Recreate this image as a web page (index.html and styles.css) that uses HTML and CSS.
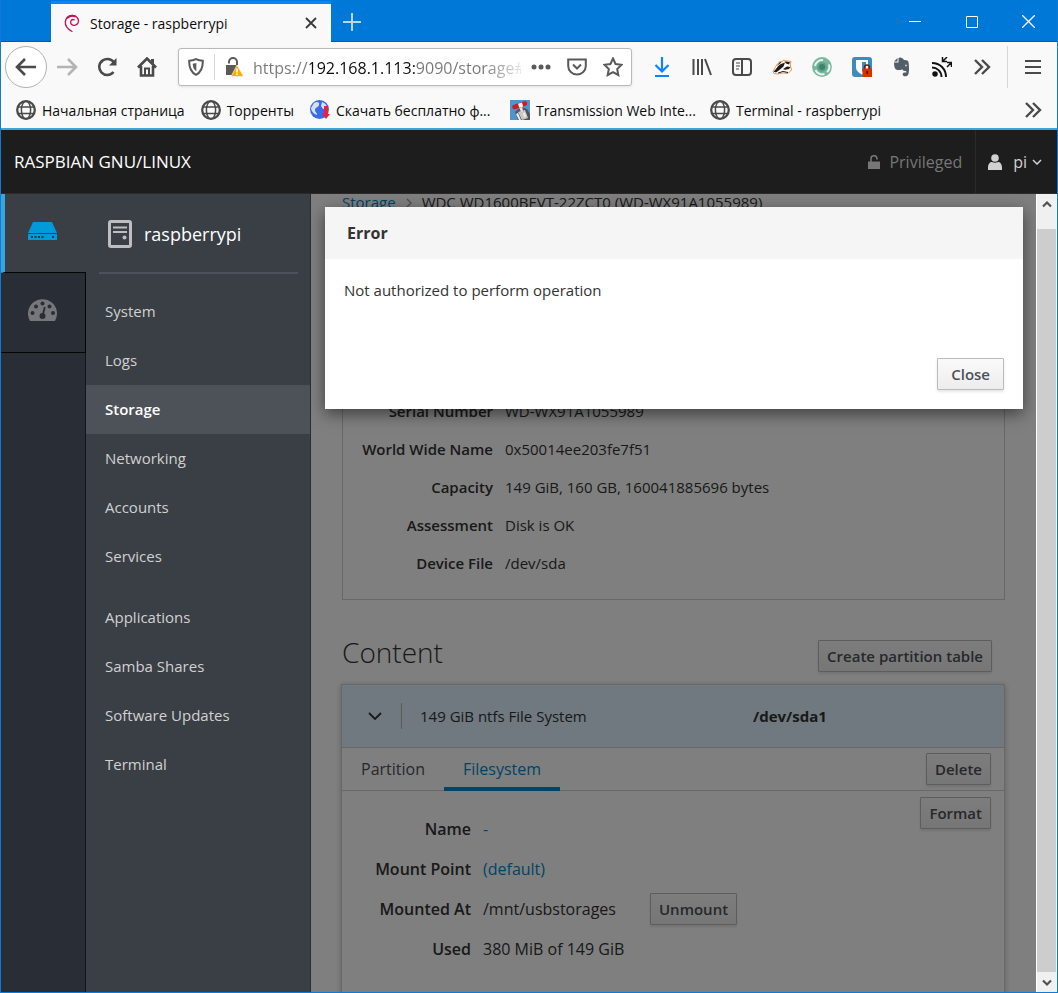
FILE: index.html
```html
<!DOCTYPE html>
<html lang="en">
<head>
    <meta charset="UTF-8">
    <meta name="viewport" content="width=device-width, initial-scale=1.0">
    <title>Storage - raspberrypi</title>
    <link rel="stylesheet" href="styles.css">
</head>
<body>
<svg class="symbols" aria-hidden="true">
    <symbol id="globe" viewBox="0 0 20 20">
        <g fill="none" stroke="#4a4a4b" stroke-width="1.5">
            <circle cx="10" cy="10" r="8.8" stroke-width="2.300"/>
            <ellipse cx="10" cy="10" rx="4.600" ry="8.800"/>
            <path d="M2 7h16M2 13.500h16"/>
        </g>
    </symbol>
    <symbol id="chevrons" viewBox="0 0 20 20">
        <path d="M3 3l7 7-7 7M10 3l7 7-7 7" fill="none" stroke="#4a4a4b" stroke-width="2.4"/>
    </symbol>
</svg>
<div class="window">
    <!-- title bar -->
    <div class="titlebar">
        <div class="tab">
            <svg class="favicon" viewBox="0 0 18 20" fill="none" stroke="#c7114f" stroke-linecap="round">
                <path d="M9 19C4 16 1 12.500 1.500 8 2 3.500 5.500 1 9.500 1c4 0 7 3 6.800 6.500C16 11 12.500 12.800 10 11.800 7.500 11 6.800 8.500 8 6.800c.8-1.200 2.200-1.500 3.500-1" stroke-width="1.500"/>
                <path d="M4 3.500C6 1.500 9 1 12 1.800" stroke-width="2.200"/>
            </svg>
            <span class="tab-title">Storage - raspberrypi</span>
            <button class="tab-close" aria-label="Close tab">
                <svg width="12" height="12" viewBox="0 0 12 12"><path d="M1 1l10 10M11 1L1 11" stroke="#3a3a3b" stroke-width="1.800"/></svg>
            </button>
        </div>
        <button class="new-tab" aria-label="New tab">
            <svg width="18" height="18" viewBox="0 0 18 18"><path d="M9 0v18M0 9h18" stroke="#b5d8f5" stroke-width="2"/></svg>
        </button>
        <div class="window-controls">
            <button aria-label="Minimize"><svg width="12" height="12" viewBox="0 0 12 12"><path d="M0 5.500h12" stroke="#fff"/></svg></button>
            <button aria-label="Maximize"><svg width="12" height="12" viewBox="0 0 12 12"><path d="M.5.5h11v11H.5z" stroke="#fff" fill="none"/></svg></button>
            <button aria-label="Close"><svg width="13" height="13" viewBox="0 0 13 13"><path d="M0 0l13 13M13 0L0 13" stroke="#fff" stroke-width="1.300"/></svg></button>
        </div>
    </div>

    <!-- navigation -->
    <div class="navbar">
        <button class="tool back" aria-label="Back"><svg width="22" height="20" viewBox="0 0 22 20"><path d="M21 10H3M10 2L2 10l8 8" class="line heavy"/></svg></button>
        <button class="tool" aria-label="Forward"><svg width="22" height="20" viewBox="0 0 22 20"><path d="M1 10h18M12 2l8 8-8 8" class="line heavy pale"/></svg></button>
        <button class="tool" aria-label="Reload"><svg width="20" height="20" viewBox="0 0 20 20"><path d="M17.500 6.500A8 8 0 1 0 16.500 15" class="line heavy"/><path d="M19.500 1v7.500H12z" fill="#4a4a4b"/></svg></button>
        <button class="tool" aria-label="Home"><svg width="20" height="20" viewBox="0 0 20 20"><path d="M1 10.500l9-9 9 9M4 9v9.500h12V9" class="line heavy"/><path d="M8 18v-6.500h4V18" class="line"/><path d="M14 2h3v5l-3-3z" fill="#4a4a4b"/></svg></button>
        <div class="urlbar">
            <svg width="16" height="18" viewBox="0 0 16 18"><path d="M8 1.200c2 1 4.500 1.500 6.800 1.500C15 9 13.500 14 8 16.800 2.500 14 1 9 1.200 2.700 3.500 2.700 6 2.200 8 1.200z" fill="none" stroke="#5a5a5b" stroke-width="2"/><path d="M8.300 5v8.300C5.500 11.500 4.800 9 4.800 5.800z" fill="#5a5a5b"/></svg>
            <span class="divider"></span>
            <svg width="18" height="20" viewBox="0 0 18 20">
                <path d="M4 6.500V5a4 4 0 0 1 8 0v3" fill="none" stroke="#5a5a5b" stroke-width="2"/>
                <path d="M1 8h11v10H1z" fill="#5a5a5b"/>
                <path d="M12 8l6 10.500c.3.600 0 1-.5 1H7c-.6 0-.8-.5-.5-1z" fill="#ffab00" stroke="#f9f9fa" stroke-width=".6"/>
                <path d="M12 11.500v4M12 16.500v1.500" stroke="#fff" stroke-width="1.600"/>
            </svg>
            <input class="url" type="text" aria-label="Address" value="https://192.168.1.113:9090/storage#/WX91A1055989">
            <svg width="20" height="6" viewBox="0 0 20 6" fill="#5a5a5b"><circle cx="3" cy="3" r="2.500"/><circle cx="10" cy="3" r="2.500"/><circle cx="17" cy="3" r="2.500"/></svg>
            <svg width="20" height="18" viewBox="0 0 20 18"><path d="M1.200 1.500h17.600v6.500a8.800 8.500 0 0 1-17.600 0z" class="line soft"/><path d="M6 6.500l4 4 4-4" class="line soft"/></svg>
            <svg width="20" height="20" viewBox="0 0 20 20"><path d="M10 1.500l2.600 5.500 6 .8-4.400 4.200 1.100 6L10 15.100 4.700 18l1.100-6L1.400 7.800l6-.8z" class="line soft"/></svg>
        </div>
        <div class="extensions">
            <button class="tool" aria-label="Downloads"><svg width="16" height="20" viewBox="0 0 16 20"><path d="M8 0v14M1.500 8L8 14.500 14.500 8M1 19h14" fill="none" stroke="#0a84ff" stroke-width="2.200"/></svg></button>
            <button class="tool" aria-label="Library"><svg width="20" height="18" viewBox="0 0 20 18"><path d="M1.500 1v16M6 1v16M10 1v16M13 1l6 16" class="line"/></svg></button>
            <button class="tool" aria-label="Sidebars"><svg width="20" height="18" viewBox="0 0 20 18"><rect x="1" y="1" width="18" height="16" rx="3" class="line"/><path d="M10 1v16" class="line"/><path d="M4 5h4M4 8h4M4 11h3" stroke="#4a4a4b" stroke-width="1.200"/></svg></button>
            <button class="tool" aria-label="Privacy Badger">
                <svg width="20" height="16" viewBox="0 0 20 16">
                    <path d="M1 12.500C3 9.500 4 5 8 2.500l2.500.2L11.500 1l2 .7 5.500.8-.8 3.500 1.300 5-3.500 3.500-5-.5-5 1-4-.5z" fill="#fff" stroke="#f08a3c" stroke-width=".9"/>
                    <path d="M1.500 12.500C4 11 5 7 9 5l4-1.500-1.500 4L8 10.500l-4 3z" fill="#1e1a18"/>
                    <path d="M4.500 7L8 3l1.500.5z" fill="#1e1a18"/>
                    <path d="M12.500 2.200l5.500 1-1 2.300-3-1zM11 10l4-2.500 3.500.5-1.500 2-4 .8z" fill="#1e1a18"/>
                    <path d="M6 14l5-1.500 5 1" fill="none" stroke="#1e1a18"/>
                </svg>
            </button>
            <button class="tool" aria-label="Ring">
                <svg width="20" height="20" viewBox="0 0 20 20"><circle cx="10" cy="10" r="9.900" fill="#7ab79e"/><path d="M3 9a7 7 0 0 1 8-5.800M17 7.500A7 7 0 0 1 15 15M12.500 17A7.200 7.200 0 0 1 3.500 13" fill="none" stroke="#e8f5ef" stroke-width="2"/><circle cx="10" cy="10" r="5" fill="#62a488"/><circle cx="10" cy="10" r="3" fill="#40826a"/></svg>
            </button>
            <button class="tool" aria-label="Bitwarden">
                <svg width="20" height="20" viewBox="0 0 20 20"><rect width="20" height="20" rx="3" fill="#3c8dbc"/><path d="M4 3h12v7c0 4-3 6-6 7.500C7 16 4 14 4 10z" fill="#fff"/><path d="M10 5h4v5c0 2-2 4-4 5z" fill="#3c8dbc"/><path d="M12.500 12v-1.500a2.500 2.500 0 0 1 5 0V12" fill="none" stroke="#7a1a06" stroke-width="1.500"/><rect x="10.500" y="11.500" width="9.500" height="8.500" fill="#d83000"/><path d="M15.200 14v3" stroke="#5a1000" stroke-width="1.500"/></svg>
            </button>
            <button class="tool" aria-label="Evernote">
                <svg width="18" height="20" viewBox="0 0 18 20"><path d="M5.500 1v4.500H1c0 3 .5 6 2 7 2 .8 4 .5 5.500.2.500-1 .5-1 1 0 .8 1 2 1.300 3 1.300.8 0 1 1 .8 1.500h-2c-1.500 0-1.800 1.500-1.500 2.500.5 1.200 2 1.500 4 1 2-.8 2.200-4 2.200-8 0-3-.3-6-1-7-.8-1-3-.8-4-1C10 1.500 9 .5 7 .5z" fill="#525e68"/><path d="M1 4.500L4.500 1v3.500z" fill="#525e68"/><circle cx="13" cy="8.500" r="1" fill="#c8ced2"/></svg>
            </button>
            <button class="tool" aria-label="Feeds">
                <svg width="20" height="20" viewBox="0 0 20 20" fill="none" stroke="#111" stroke-width="1.900"><circle cx="3" cy="17" r="1.800" fill="#111"/><path d="M0 10.500c5 0 9.500 4 9.500 9.500M0 6c8 0 14 6 14 14"/><path d="M15 0l-4 4M10.500 0v4.500H15M15 5.500h4.500V10M19 6l-4 4" stroke-width="1.500"/></svg>
            </button>
            <button class="tool" aria-label="More tools"><svg width="20" height="20"><use href="#chevrons"/></svg></button>
        </div>
        <button class="menu" aria-label="Menu"><svg width="16" height="16" viewBox="0 0 16 16"><path d="M0 2h16M0 8h16M0 14h16" class="line"/></svg></button>
    </div>

    <!-- bookmarks -->
    <nav class="bookmarks">
        <a href="#"><svg class="bm-icon"><use href="#globe"/></svg>Начальная страница</a>
        <a href="#"><svg class="bm-icon"><use href="#globe"/></svg>Торренты</a>
        <a href="#" class="long">
            <svg class="bm-icon" viewBox="0 0 20 20"><circle cx="9.500" cy="9.500" r="9.500" fill="#3a6be8"/><path d="M4 3c3-2 6-1 5 2s-4 2-4 5 3 3 2 5c-3-1-6-4-6-7zM12 2c3 1 5 3 5 6l-4 1-2-3z" fill="#d4e2ff"/><path d="M14 6h4v8h2l-4 5-4-5h2z" fill="#ee1f3f"/></svg>
            Скачать бесплатно ф...
        </a>
        <a href="#" class="long">
            <svg class="bm-icon" viewBox="0 0 20 20"><path d="M0 0h20v20H0z" fill="#5094cf"/><path d="M5 12l6-5 6 2 3 5v6H8z" fill="#555"/><path d="M8 12l7-2 3 8-6 2z" fill="#c9c9c9"/><path d="M6 14l2-1 3 7H9zM13 13l2-.5 1 4-2 .5z" fill="#eee"/><path d="M9 7l3-1 1 5-2 1z" fill="#e6e6e6"/><path d="M4.500 7L15 3.500" stroke="#cf1a1f" stroke-width="4.500" stroke-linecap="round"/><path d="M8 3.800l4-1.300 1.200 4-4 1.300z" fill="#f4f4f4"/></svg>
            Transmission Web Inte...
        </a>
        <a href="#"><svg class="bm-icon"><use href="#globe"/></svg>Terminal - raspberrypi</a>
        <button class="more" aria-label="More bookmarks"><svg width="20" height="20"><use href="#chevrons"/></svg></button>
    </nav>

    <!-- cockpit -->
    <header class="topbar">
        <span class="brand">RASPBIAN GNU/LINUX</span>
        <span class="privileged">
            <svg width="12" height="14" viewBox="0 0 12 14"><path d="M3 7V4a3 3 0 0 1 6-.5v1" fill="none" stroke="#777" stroke-width="1.600"/><path d="M0 6.500h12V14H0z" fill="#777"/></svg>
            Privileged
        </span>
        <button class="user">
            <svg width="14" height="16" viewBox="0 0 14 16" fill="#d1d1d1"><circle cx="7" cy="4" r="3.800"/><path d="M0 16v-2.500C0 10 2 8 4 8c2 1 4 1 6 0 2 0 4 2 4 5.500V16z"/></svg>
            <span>pi</span>
            <svg class="caret" width="10" height="6" viewBox="0 0 10 6"><path d="M1 1l4 4 4-4" fill="none" stroke="#d1d1d1" stroke-width="1.500"/></svg>
        </button>
    </header>

    <div class="workspace">
        <nav class="rail">
            <a href="#" class="active" aria-label="Host">
                <svg width="30" height="18" viewBox="0 0 30 18"><path d="M5 0h19l5 11H0z" fill="#0099d9"/><path d="M0 12h29v6H0z" fill="#0099d9"/><path d="M3 15h2M6.500 15h2M10 15h2M13.500 15h2M24 15h2" stroke="#263a4c" stroke-width="2"/></svg>
            </a>
            <a href="#" aria-label="Dashboard">
                <svg width="30" height="22" viewBox="0 0 30 22"><path d="M2 22A14.500 14.500 0 1 1 27 22z" fill="#75777b"/><g fill="#292e36"><circle cx="4.500" cy="14" r="2"/><circle cx="8" cy="7.500" r="2"/><circle cx="14.500" cy="4.500" r="2"/><circle cx="21.500" cy="7.500" r="2"/><circle cx="25" cy="14" r="2"/><circle cx="14.500" cy="17" r="3"/></g><path d="M14.800 16l2-8" stroke="#292e36" stroke-width="1.800"/></svg>
            </a>
        </nav>

        <nav class="sidebar">
            <div class="host">
                <svg width="24" height="28" viewBox="0 0 24 28"><rect x="1.500" y="1.500" width="21" height="25" rx="1.500" fill="none" stroke="#bdbec1" stroke-width="3"/><path d="M5 7.500h14M5 12h14" stroke="#bdbec1" stroke-width="2.200"/><circle cx="16.500" cy="17.500" r="2" fill="#bdbec1"/></svg>
                raspberrypi
            </div>
            <ul>
                <li><a href="#">System</a></li>
                <li><a href="#">Logs</a></li>
                <li><a href="#" class="active">Storage</a></li>
                <li><a href="#">Networking</a></li>
                <li><a href="#">Accounts</a></li>
                <li><a href="#">Services</a></li>
            </ul>
            <ul>
                <li><a href="#">Applications</a></li>
                <li><a href="#">Samba Shares</a></li>
                <li><a href="#">Software Updates</a></li>
                <li><a href="#">Terminal</a></li>
            </ul>
        </nav>

        <main class="main">
            <div class="page">
                <div class="breadcrumb">
                    <a href="#">Storage</a>
                    <svg width="6" height="10" viewBox="0 0 6 10"><path d="M1 1l4 4-4 4" fill="none" stroke="#9c9c9c" stroke-width="1.300"/></svg>
                    <span>WDC WD1600BEVT-22ZCT0 (WD-WX91A1055989)</span>
                </div>

                <dl class="drive">
                    <dt>Serial Number</dt><dd>WD-WX91A1055989</dd>
                    <dt>World Wide Name</dt><dd>0x50014ee203fe7f51</dd>
                    <dt>Capacity</dt><dd>149 GiB, 160 GB, 160041885696 bytes</dd>
                    <dt>Assessment</dt><dd>Disk is OK</dd>
                    <dt>Device File</dt><dd>/dev/sda</dd>
                </dl>

                <div class="content-head">
                    <h1>Content</h1>
                    <button class="btn">Create partition table</button>
                </div>

                <section class="volume">
                    <div class="volume-head">
                        <svg class="toggle" width="14" height="8" viewBox="0 0 14 8"><path d="M1 1l6 6 6-6" fill="none" stroke="#333" stroke-width="1.800"/></svg>
                        <span class="volume-name">149 GiB ntfs File System</span>
                        <strong>/dev/sda1</strong>
                    </div>
                    <div class="tabs">
                        <a href="#">Partition</a>
                        <a href="#" class="active">Filesystem</a>
                        <button class="btn">Delete</button>
                    </div>
                    <div class="volume-body">
                        <dl class="fs">
                            <dt>Name</dt><dd><a href="#">-</a></dd>
                            <dt>Mount Point</dt><dd><a href="#">(default)</a></dd>
                            <dt>Mounted At</dt><dd>/mnt/usbstorages <button class="btn">Unmount</button></dd>
                            <dt>Used</dt><dd>380 MiB of 149 GiB</dd>
                        </dl>
                        <button class="btn">Format</button>
                    </div>
                </section>
            </div>

            <div class="backdrop">
                <div class="modal" role="dialog" aria-labelledby="modal-title">
                    <h2 id="modal-title">Error</h2>
                    <p>Not authorized to perform operation</p>
                    <div class="modal-footer"><button class="btn btn-close">Close</button></div>
                </div>
            </div>
        </main>

        <div class="scrollbar">
            <svg width="10" height="8" viewBox="0 0 10 8"><path d="M1 6.500l4-4 4 4" fill="none" stroke="#505050" stroke-width="2.200"/></svg>
            <div class="thumb"></div>
            <svg width="10" height="8" viewBox="0 0 10 8"><path d="M1 1.500l4 4 4-4" fill="none" stroke="#505050" stroke-width="2.200"/></svg>
        </div>
    </div>
</div>
</body>
</html>
```
FILE: styles.css
```css
* {
    box-sizing: border-box;
}
body {
    margin: 0;
    font-family: "Open Sans", "Noto Sans", sans-serif;
    font-size: 15px;
    color: #333;
}
a {
    color: #0088ce;
    text-decoration: none;
}
button {
    font: inherit;
    padding: 0;
    border: 0;
    background: none;
}
svg {
    flex: none;
}
ul, dl, dd, h1, h2, p {
    margin: 0;
    padding: 0;
}
.symbols {
    position: absolute;
    width: 0;
    height: 0;
}
.line {
    fill: none;
    stroke: #4a4a4b;
    stroke-width: 2;
}
.line.heavy {
    stroke-width: 2.6;
}
.line.pale {
    stroke: #b4b4b5;
}
.line.soft {
    stroke: #5a5a5b;
}

.window {
    display: flex;
    flex-direction: column;
    height: 100vh;
    border: 1px solid #0f7bd6;
    border-top: 0;
    overflow: hidden;
}

/* browser title bar */
.titlebar {
    display: flex;
    height: 42px;
    padding-top: 1px;
    background: #0078d7;
    box-shadow: inset 0 -1px #005a9e;
}
.tab {
    display: flex;
    align-items: center;
    width: 280px;
    margin-left: 50px;
    padding: 0 14px 0 13px;
    border-top: 3px solid #0a84ff;
    background: #f9f9fa;
    color: #0c0c0d;
    font-size: 14px;
}
.favicon {
    width: 16px;
    height: 19px;
}
.tab-title {
    flex: 1;
    margin-left: 10px;
}
.tab-close, .new-tab, .window-controls button {
    display: flex;
    align-items: center;
    justify-content: center;
}
.new-tab {
    width: 42px;
}
.window-controls {
    display: flex;
    margin-left: auto;
}
.window-controls button {
    width: 57px;
}

/* browser toolbar */
.navbar {
    display: flex;
    align-items: center;
    height: 50px;
    padding-left: 4px;
    background: #f9f9fa;
}
.tool {
    display: flex;
    align-items: center;
    justify-content: center;
    width: 40px;
    height: 42px;
}
.back {
    width: 42px;
    border: 1px solid #b1b1b3;
    border-radius: 50%;
    background: #fff;
}
.urlbar {
    display: flex;
    flex: 1;
    align-items: center;
    gap: 16px;
    height: 38px;
    min-width: 0;
    margin: 0 10px 0 11px;
    padding: 0 8px 0 9px;
    border: 1px solid #b9b9ba;
    border-radius: 3px;
    background: #fff;
    box-shadow: 0 1px 3px #0000001a;
}
.urlbar .divider {
    width: 1px;
    height: 26px;
    margin: 0 -6px 0 -6px;
    background: #d7d7db;
}
.url {
    flex: 1;
    min-width: 0;
    margin: 0 -6px;
    padding: 2px 0 0;
    border: 0;
    outline: 0;
    font: 16px "Open Sans", sans-serif;
    color: transparent;
    /* host part is dark, the rest is grey and fades out on the right */
    background: linear-gradient(90deg, #777 57px, #0c0c0d 57px 162px, #777 162px 230px, transparent 276px);
    -webkit-background-clip: text;
    background-clip: text;
}
.extensions {
    display: flex;
    margin-right: 5px;
}
.menu {
    width: 50px;
    height: 42px;
    border-left: 1px solid #d7d7db;
}
.menu svg {
    display: block;
    margin: auto;
}
.bookmarks {
    display: flex;
    align-items: center;
    gap: 16px;
    height: 36px;
    padding: 0 14px 0 15px;
    background: #f9f9fa;
    font-size: 14px;
    white-space: nowrap;
}
.bookmarks a {
    display: flex;
    align-items: center;
    gap: 6px;
    color: #0c0c0d;
}
.bookmarks .long {
    width: 184px;
}
.bm-icon {
    width: 20px;
    height: 20px;
}
.more {
    display: flex;
    margin-left: auto;
}

/* cockpit top bar */
.topbar {
    display: flex;
    align-items: center;
    height: 66px;
    padding-left: 13px;
    border-top: 2px solid #39a5dc;
    border-bottom: 1px solid #2b2b2b;
    background: #1d1d1d;
    color: #fff;
}
.brand {
    flex: 1;
    font-size: 17px;
}
.privileged {
    display: flex;
    align-items: center;
    gap: 9px;
    margin-right: 13px;
    color: #777;
    font-size: 16px;
}
.user {
    display: flex;
    align-items: center;
    height: 100%;
    padding: 0 15px 0 12px;
    border-left: 1px solid #2b2b2b;
    color: #d1d1d1;
    font-size: 16px;
}
.user span {
    margin: 0 5px 0 11px;
}

.workspace {
    display: flex;
    flex: 1;
    min-height: 0;
}
.rail {
    width: 85px;
    background: #292e36;
    box-shadow: inset -1px 0 #121417;
}
.rail a {
    display: flex;
    align-items: center;
    justify-content: center;
    height: 80px;
    padding-bottom: 5px;
    border-bottom: 1px solid #050505;
    border-right: 1px solid #050505;
}
.rail a.active {
    height: 79px;
    border-left: 4px solid #39a5dc;
    border-right: 0;
    padding-right: 6px;
    background: #393f45;
}
.sidebar {
    width: 225px;
    border-right: 1px solid #292e36;
    background: #393f45;
}
.host {
    display: flex;
    align-items: center;
    gap: 12px;
    height: 80px;
    margin: 0 12px 13px 13px;
    padding: 2px 0 0 9px;
    border-bottom: 2px solid #4d525a;
    color: #fff;
    font-size: 18px;
}
.sidebar ul {
    margin-bottom: 12px;
    list-style: none;
}
.sidebar a {
    display: block;
    padding-left: 19px;
    line-height: 49px;
    color: #d1d1d1;
}
.sidebar a.active {
    background: #4d5258;
    color: #fff;
    font-weight: 600;
}

/* storage page */
.main {
    position: relative;
    flex: 1;
    min-width: 0;
    overflow: hidden;
    background: #fff;
}
.page {
    padding: 0 31px 0 30px;
}
.breadcrumb {
    display: flex;
    align-items: center;
    gap: 10px;
    padding-left: 1px;
    line-height: 17px;
}
.drive {
    display: grid;
    grid-template-columns: 150px 1fr;
    column-gap: 12px;
    margin: 20px 0 0 1px;
    padding: 160px 0 17px;
    border: 1px solid #d1d1d1;
    line-height: 38px;
}
dt {
    font-weight: 600;
    text-align: right;
}
.content-head {
    display: flex;
    align-items: flex-end;
    justify-content: space-between;
    margin: 34px 13px 12px 1px;
}
h1 {
    padding-bottom: 2px;
    font-size: 28px;
    font-weight: 300;
    line-height: 36px;
}
.btn {
    height: 32px;
    padding: 0 8px;
    border: 1px solid #bbb;
    border-radius: 1px;
    background: linear-gradient(#fafafa, #ededed);
    box-shadow: 0 2px 3px #0303031a;
    color: #4d5258;
    font-size: 15px;
    font-weight: 600;
    line-height: 30px;
}
.volume {
    border: 1px solid #d1d1d1;
    border-bottom: 0;
    box-shadow: 0 1px 6px #00000040;
}
.volume-head {
    display: flex;
    align-items: center;
    height: 63px;
    padding-left: 26px;
    border-bottom: 1px solid #d1d1d1;
    background: #def3ff;
}
.volume-name {
    flex: 1;
    margin-left: 19px;
    padding-left: 18px;
    border-left: 1px solid #bbb;
    line-height: 26px;
}
.volume-head strong {
    flex: 0 0 251px;
}
.tabs {
    display: flex;
    align-items: center;
    height: 43px;
    padding-right: 13px;
    border-bottom: 1px solid #d1d1d1;
    font-size: 16px;
}
.tabs a {
    height: 43px;
    padding: 0 19px;
    color: #4d5258;
    line-height: 42px;
}
.tabs a.active {
    border-bottom: 4px solid #0088ce;
    color: #0088ce;
}
.tabs .btn {
    margin-left: auto;
}
.volume-body {
    display: flex;
    align-items: flex-start;
    justify-content: space-between;
    height: 240px;
    padding: 6px 13px 0 0;
}
.fs {
    display: grid;
    grid-template-columns: 129px 1fr;
    column-gap: 12px;
    padding-top: 12px;
    font-size: 16px;
    line-height: 40px;
}
.fs dd {
    display: flex;
    align-items: center;
    gap: 34px;
    height: 40px;
}

/* error dialog */
.backdrop {
    position: absolute;
    inset: 0;
    padding: 13px 13px 0 14px;
    background: #00000080;
}
.modal {
    background: #fff;
    box-shadow: 0 5px 15px #00000080;
}
.modal h2 {
    padding-left: 22px;
    background: #f5f5f5;
    font-size: 16px;
    font-weight: 700;
    line-height: 52px;
}
.modal p {
    padding: 20px 19px 56px;
    line-height: 23px;
}
.modal-footer {
    padding: 0 19px 19px;
    text-align: right;
}
.btn-close {
    padding: 0 13px;
    vertical-align: top;
}

.scrollbar {
    display: flex;
    flex-direction: column;
    align-items: center;
    width: 21px;
    padding: 6px 0 5px;
    border: solid #fff;
    border-width: 0 1px;
    background: #f0f0f0;
}
.thumb {
    flex: 1;
    align-self: stretch;
    margin: 21px 0 7px;
    background: #cdcdcd;
}
```
